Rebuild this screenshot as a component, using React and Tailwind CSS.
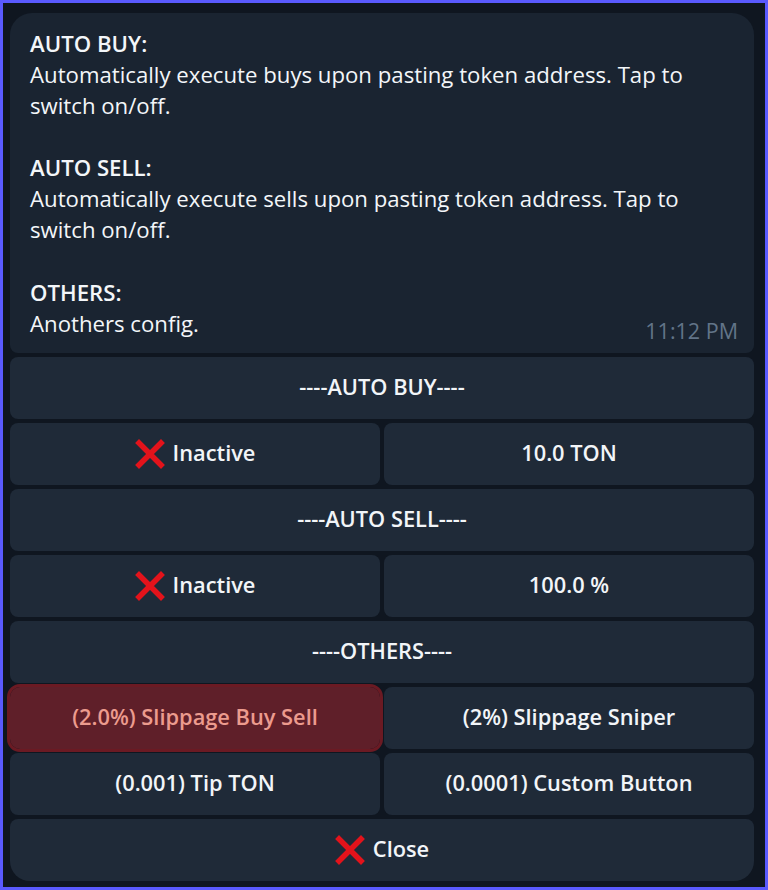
import React from "react";

const font = { fontFamily: '"Open Sans", "Noto Sans", sans-serif' };

function RedX() {
  return (
    <svg width="30" height="30" viewBox="0 0 30 30" className="shrink-0">
      <path d="M4 4 L26 26 M26 4 L4 26" stroke="#e3131b" strokeWidth="5.5" strokeLinecap="square" />
    </svg>
  );
}

function Btn({ children, className = "" }) {
  return (
    <div
      className={
        "flex h-[62px] items-center justify-center gap-2 rounded-[8px] bg-[#1f2a38] text-[21.8px] font-semibold text-[#f2f5f8] " +
        className
      }
    >
      {children}
    </div>
  );
}

export default function App() {
  return (
    <div
      className="flex h-[890px] w-[768px] flex-col border-[3px] border-[#5a5afe] bg-[#0f1620] pb-[6px] pl-[7px] pr-[11px] pt-[10px]"
      style={font}
    >
      <div className="rounded-t-[22px] rounded-b-[8px] bg-[#1a2431] pb-[14px] pl-[20px] pr-[16px] pt-[15px] text-[22.2px] leading-[31.1px] text-[#f3f6f9]">
        <div className="font-semibold">AUTO BUY:</div>
        <div>
          Automatically execute buys upon pasting token address. Tap to
          <br />
          switch on/off.
        </div>
        <div className="h-[31px]" />
        <div className="font-semibold">AUTO SELL:</div>
        <div>
          Automatically execute sells upon pasting token address. Tap to
          <br />
          switch on/off.
        </div>
        <div className="h-[31px]" />
        <div className="font-semibold">OTHERS:</div>
        <div className="flex items-end justify-between">
          <span className="whitespace-nowrap">Anothers config.</span>
          <span className="translate-y-[4px] whitespace-nowrap text-[21.5px] leading-[24px] text-[#627488]">11:12 PM</span>
        </div>
      </div>
      <div className="mt-[4px] flex flex-col gap-[4px]">
        <Btn>----AUTO BUY----</Btn>
        <div className="grid grid-cols-2 gap-[4px]">
          <Btn>
            <RedX />
            <span>Inactive</span>
          </Btn>
          <Btn>10.0 TON</Btn>
        </div>
        <Btn>----AUTO SELL----</Btn>
        <div className="grid grid-cols-2 gap-[4px]">
          <Btn>
            <RedX />
            <span>Inactive</span>
          </Btn>
          <Btn>100.0 %</Btn>
        </div>
        <Btn>----OTHERS----</Btn>
        <div className="grid grid-cols-2 gap-[4px]">
          <Btn className="!rounded-[10px] !bg-[#5f1f29] !text-[#ec9b8e] outline-[3px] outline-solid outline-[#6b1a23]">
            (2.0%) Slippage Buy Sell
          </Btn>
          <Btn>(2%) Slippage Sniper</Btn>
        </div>
        <div className="grid grid-cols-2 gap-[4px]">
          <Btn>(0.001) Tip TON</Btn>
          <Btn>(0.0001) Custom Button</Btn>
        </div>
        <Btn className="rounded-b-[20px]">
          <RedX />
          <span>Close</span>
        </Btn>
      </div>
    </div>
  );
}
